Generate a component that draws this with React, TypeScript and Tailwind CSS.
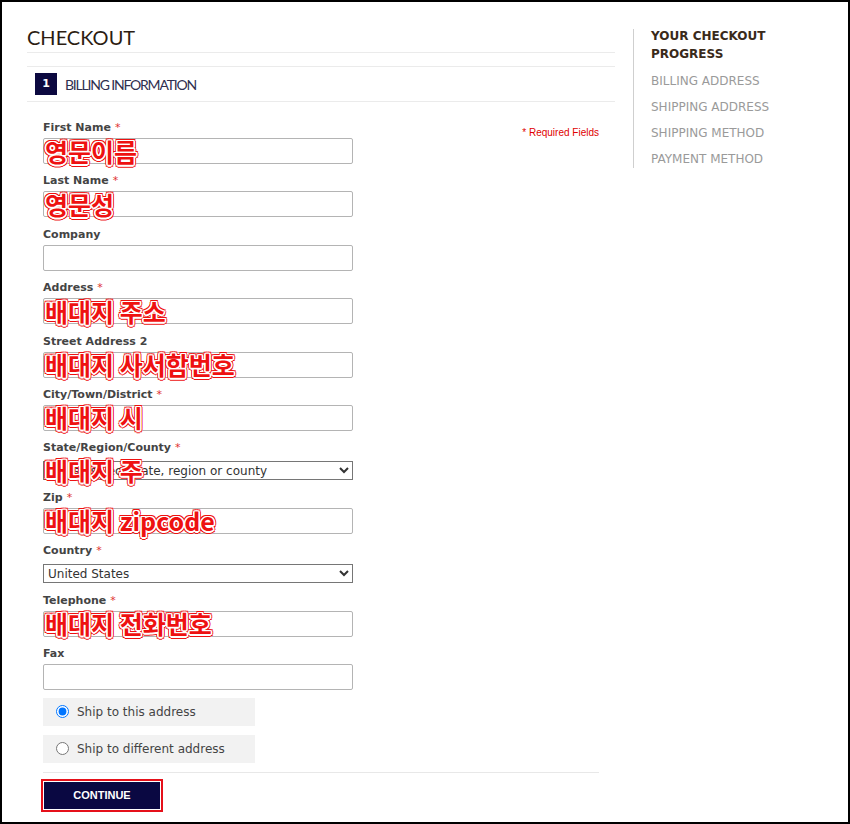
import React from "react";

type Field = {
  label: string;
  req?: boolean;
  select?: string;
  overlay?: string;
};

const fields: Field[] = [
  { label: "First Name", req: true, overlay: "영문이름" },
  { label: "Last Name", req: true, overlay: "영문성" },
  { label: "Company" },
  { label: "Address", req: true, overlay: "배대지 주소" },
  { label: "Street Address 2", overlay: "배대지 사서함번호" },
  { label: "City/Town/District", req: true, overlay: "배대지 시" },
  { label: "State/Region/County", req: true, select: "Please select state, region or county", overlay: "배대지 주" },
  { label: "Zip", req: true, overlay: "배대지 zipcode" },
  { label: "Country", req: true, select: "United States" },
  { label: "Telephone", req: true, overlay: "배대지 전화번호" },
  { label: "Fax" },
];

function Overlay({ text }: { text: string }) {
  return (
    <div className="pointer-events-none absolute inset-y-0 left-[2px] flex items-center">
      <span className="whitespace-nowrap font-['Noto_Sans_CJK_KR',sans-serif] text-[25px] font-bold leading-none text-[#ee1111] [text-shadow:1.5px_0_0_#fff,-1.5px_0_0_#fff,0_1.5px_0_#fff,0_-1.5px_0_#fff,1.2px_1.2px_0_#fff,-1.2px_-1.2px_0_#fff,1.2px_-1.2px_0_#fff,-1.2px_1.2px_0_#fff,2.5px_0_0_#e11,-2.5px_0_0_#e11,0_2.5px_0_#e11,0_-2.5px_0_#e11,2px_2px_0_#e11,-2px_-2px_0_#e11,2px_-2px_0_#e11,-2px_2px_0_#e11]">
        {text}
      </span>
    </div>
  );
}

function FieldRow({ f }: { f: Field }) {
  return (
    <div className="flex flex-col">
      <label className="block text-[11px] font-bold leading-[16px] text-[#444]">
        {f.label}
        {f.req && <span className="ml-[4px] font-normal text-[#e03030]">*</span>}
      </label>
      {f.select ? (
        <div className="relative mt-[5px] w-[310px]">
          <select
            defaultValue={f.select}
            className="block h-[19px] w-[310px] rounded-none border border-[#767676] bg-white pl-0 text-[12px] leading-[17px] text-[#333]"
          >
            <option>{f.select}</option>
          </select>
          {f.overlay && <Overlay text={f.overlay} />}
        </div>
      ) : (
        <div className="relative mt-[2px] w-[310px]">
          <input
            type="text"
            className="block h-[26px] w-[310px] rounded-[2px] border border-[#b4b4b4] bg-white px-[4px] text-[12px]"
          />
          {f.overlay && <Overlay text={f.overlay} />}
        </div>
      )}
    </div>
  );
}

export default function App() {
  return (
    <div className="box-border h-[824px] w-[850px] overflow-hidden border-2 border-black bg-white font-['DejaVu_Sans',Verdana,sans-serif]">
      <div className="flex pl-[25px] pt-[22px]">
        {/* Left column */}
        <div className="w-[588px]">
          <h1 className="border-b border-[#ebebeb] pb-[1px] font-['Lato',sans-serif] text-[20px] font-normal leading-[27px] text-[#2c1d12]">
            CHECKOUT
          </h1>
          <div className="mt-[13px] flex h-[36px] items-center border-y border-[#ebebeb] pl-[8px]">
            <span className="flex h-[22px] w-[22px] items-center justify-center bg-[#0c0940] text-[11px] font-bold text-white">
              1
            </span>
            <span className="ml-[8px] font-['Lato',sans-serif] text-[14px] tracking-[-1.2px] text-[#2f2f4f]">
              BILLING INFORMATION
            </span>
          </div>

          <div className="px-[16px] pt-[18px]">
            <div className="flex items-start justify-between">
              <div className="flex flex-col">
                <div className="flex flex-col gap-[9.4px]">
                  {fields.map((f) => (
                    <FieldRow key={f.label} f={f} />
                  ))}
                </div>
                <div className="mt-[8px] flex flex-col gap-[9px]">
                  <div className="flex h-[28px] w-[212px] items-center bg-[#f2f2f2] pl-[13px]">
                    <input type="radio" name="ship" defaultChecked className="m-0 h-[13px] w-[13px]" />
                    <span className="ml-[8px] text-[12px] text-[#444]">Ship to this address</span>
                  </div>
                  <div className="flex h-[28px] w-[212px] items-center bg-[#f2f2f2] pl-[13px]">
                    <input type="radio" name="ship" className="m-0 h-[13px] w-[13px]" />
                    <span className="ml-[8px] text-[12px] text-[#444]">Ship to different address</span>
                  </div>
                </div>
              </div>
              <span className="mt-[7px] font-['Liberation_Sans',Arial,sans-serif] text-[10px] leading-[12px] text-[#e00000]">
                * Required Fields
              </span>
            </div>
            <div className="mt-[9px] border-t border-[#e8e8e8]" />
            <div className="-ml-[2px] mt-[6px] inline-block border-2 border-[#e5101a] bg-white p-[1px]">
              <button className="block h-[27px] w-[116px] bg-[#0a0842] font-['Liberation_Sans',Arial,sans-serif] text-[11px] font-bold text-white">
                CONTINUE
              </button>
            </div>
          </div>
        </div>

        {/* Sidebar */}
        <div className="ml-[18px] mt-[5px] h-[139px] border-l border-[#cfcfcf] pl-[17px]">
          <div className="-mt-[2px] text-[12px] font-bold leading-[18px] text-[#3a2a1a]">
            YOUR CHECKOUT
            <br />
            PROGRESS
          </div>
          <ul className="mt-[5px]">
            <li className="text-[12px] leading-[26px] text-[#9a9a9a]">BILLING ADDRESS</li>
            <li className="text-[12px] leading-[26px] text-[#9a9a9a]">SHIPPING ADDRESS</li>
            <li className="text-[12px] leading-[26px] text-[#9a9a9a]">SHIPPING METHOD</li>
            <li className="text-[12px] leading-[26px] text-[#9a9a9a]">PAYMENT METHOD</li>
          </ul>
        </div>
      </div>
    </div>
  );
}
